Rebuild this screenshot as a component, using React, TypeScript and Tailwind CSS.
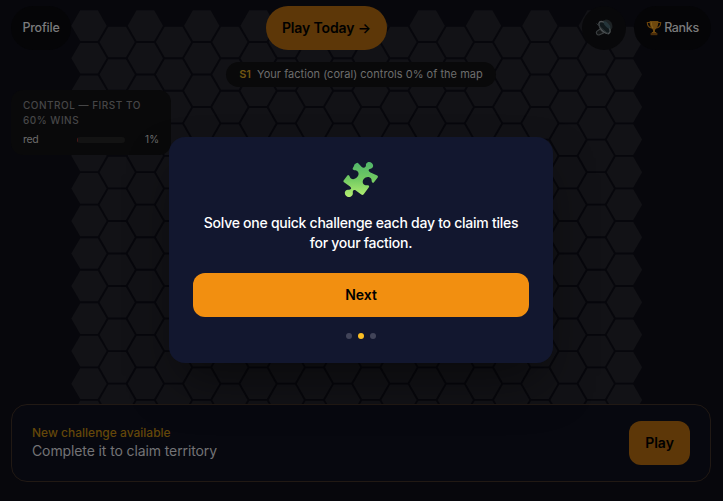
import React from "react";

const COLS = 20;
const ROWS = 14;
const COL_STEP = 28.18;
const ROW_STEP = 32.54;

const hexPoints = (cx: number, cy: number) => {
  const r = 17.7;
  const h = r * 0.866;
  return [
    [cx - r, cy],
    [cx - r / 2, cy - h],
    [cx + r / 2, cy - h],
    [cx + r, cy],
    [cx + r / 2, cy + h],
    [cx - r / 2, cy + h],
  ]
    .map((p) => p.map((n) => n.toFixed(2)).join(","))
    .join(" ");
};

const HexMap: React.FC = () => (
  <svg className="absolute inset-0" width="723" height="501" viewBox="0 0 723 501">
    {Array.from({ length: COLS * ROWS }, (_, i) => {
      const col = i % COLS;
      const row = Math.floor(i / COLS);
      const cx = 89 + col * COL_STEP;
      const cy = 25.7 + row * ROW_STEP + (col % 2 ? ROW_STEP / 2 : 0);
      return <polygon key={i} points={hexPoints(cx, cy)} fill="#121216" />;
    })}
  </svg>
);

const MutedIcon: React.FC = () => (
  <svg width="20" height="20" viewBox="0 0 20 20" fill="none">
    <path d="M6 11 2.800 13.300c-1.300 1.800.2 3.900 2.300 3.700L9.500 15z" fill="#141617" stroke="#3c4042" strokeWidth="1.100" />
    <path d="M8 3 12 1.500c4.500.3 7 4.300 6.300 8.500L14.500 15z" fill="#1d2224" />
    <ellipse cx="10.500" cy="9.500" rx="3.800" ry="7.300" transform="rotate(-42 10.500 9.500)" fill="#10181b" stroke="#4c5153" strokeWidth="1.300" />
    <ellipse cx="13" cy="7" rx="1.900" ry="4.500" transform="rotate(-42 13 7)" fill="#25353a" />
    <path d="M2.500 5.500 14.500 16.500" stroke="#303638" strokeWidth="1" />
  </svg>
);

const TrophyIcon: React.FC = () => (
  <svg width="16" height="16" viewBox="0 0 16 16" fill="none">
    <path d="M4 2.500H1.300c0 3 1.200 4.800 4 5.500M12 2.500h2.700c0 3-1.200 4.800-4 5.500" stroke="#6b430b" strokeWidth="1.100" />
    <path d="M3.600 1h8.800c0 4.500-1 7.500-3.400 8.700v2.300h1.200v1.500H5.800V12H7V9.700C4.600 8.500 3.600 5.500 3.600 1Z" fill="#6f480d" />
    <path d="M5.300 2.200c.1 2.800.6 4.600 1.700 5.800" stroke="#8a671d" strokeWidth=".9" />
    <path d="M4.600 13h6.800v2.200H4.600z" fill="#4b2d0a" />
  </svg>
);

const PuzzleIcon: React.FC = () => (
  <svg width="36" height="36" viewBox="0 0 36 36">
    <defs>
      <linearGradient id="puzzle" x1="0" y1="0" x2="0" y2="1">
        <stop offset="0" stopColor="#50b46a" />
        <stop offset="0.5" stopColor="#73cb62" />
        <stop offset="1" stopColor="#b4ef72" />
      </linearGradient>
    </defs>
    <path
      fill="url(#puzzle)"
      d="M11.600 2.200 13.600 .9Q14.600 .4 15.500 1.400L18.500 4.700C20 6.200 21.500 6 22.500 4.800C23.400 3.700 22.500 3 23.200 1.700C24.300-.3 27.300-.4 29 1.200C30.800 3 30.300 5.300 28.700 6.200C27.200 7 26 6.700 25.700 7.900C25.400 9 26.500 9.900 27.500 10.500L34.200 13.600Q35.500 14.400 34.500 15.700L31 20.200Q30.200 21.200 29.300 20.400C28.200 19.400 29 18.200 28.200 16.800C26.800 14.300 22.800 14.300 20.700 17C18.800 19.500 19.700 22.800 22.500 23.300C23.900 23.600 24.800 22.800 25.800 23.700Q26.500 24.400 25.700 25.400L20.700 32.300Q19.600 33.600 18.300 32.600L12.800 28.500C11.600 27.600 10.300 28.100 9.900 29.200C9.500 30.300 10.300 31.300 9.500 32.900C8.300 35.200 4.800 35.600 3 33.700C1.100 31.700 1.600 28.900 3.700 28C5.400 27.300 7 28.100 7.800 27C8.600 25.900 7.700 25 6.700 24.200L1 20.300Q-.1 19.400 .8 18.200L4.200 13.700Q5.100 12.600 6.100 13.500C7 14.300 6.700 15.500 8 16.500C10.300 18.200 14.200 16.500 15.300 13.300C16.200 10.400 14.700 8.600 12.600 8.200C11.400 8 10.700 8.400 10 7.600C9.200 6.700 9.900 5.900 10.600 4.800Z"
    />
  </svg>
);

const Header: React.FC = () => (
  <header className="relative flex h-[50px] items-end justify-between px-[11px]">
    <button className="h-11 w-[60px] rounded-full bg-[#050507] text-[12.5px] font-medium tracking-[-0.2px] text-[#7b7b7c]">
      Profile
    </button>
    <button className="h-11 w-[121px] rounded-full bg-[#5d3708] pb-0.5 text-[14px] font-semibold tracking-[-0.12px] text-black">
      Play Today →
    </button>
    <div className="flex gap-2">
      <button className="flex size-11 items-center justify-center rounded-full bg-[#08080a]">
        <MutedIcon />
      </button>
      <button className="flex h-11 w-[77px] items-center justify-center gap-0.5 rounded-full bg-[#050507] text-[12.5px] font-medium tracking-[-0.35px] text-[#7b7b7c]">
        <TrophyIcon />
        Ranks
      </button>
    </div>
  </header>
);

const ControlPanel: React.FC = () => (
  <section className="relative mt-[3px] ml-[11px] h-[65px] w-40 rounded-xl bg-[#09090a] px-3 pt-2 text-[#6c6c6c]">
    <h2 className="text-[10px] leading-[15px] font-medium tracking-[0.5px] text-[#464647]">
      CONTROL — FIRST TO
      <br />
      60% WINS
    </h2>
    <div className="mt-1 flex h-[15px] items-center text-[10.5px]">
      <span className="w-[54px] tracking-[-0.3px]">red</span>
      <span className="h-1.5 w-12 overflow-hidden rounded-full bg-[#131313]">
        <span className="block h-full w-px bg-[#4a1717]" />
      </span>
      <span className="ml-auto text-[10px]">1%</span>
    </div>
  </section>
);

const ChallengeBar: React.FC = () => (
  <section className="relative mx-[11px] mt-auto mb-[19px] flex h-[78px] items-center justify-between rounded-2xl border border-[#211914] bg-[#07080f] px-5">
    <div>
      <p className="text-[12px] leading-4 font-medium text-[#644709]">New challenge available</p>
      <p className="text-[14px] leading-5 tracking-[-0.11px] text-[#737376]">Complete it to claim territory</p>
    </div>
    <button className="h-11 w-[61px] rounded-xl bg-[#5d3708] pb-0.5 text-[14px] font-semibold text-black">Play</button>
  </section>
);

const Onboarding: React.FC = () => (
  <div className="absolute inset-x-0 top-0 flex h-[500px] items-center justify-center">
    <div className="flex h-[226px] w-96 flex-col items-center rounded-2xl bg-[#12172f] px-6 pt-[25px] shadow-2xl shadow-black/50">
      <PuzzleIcon />
      <p className="mt-[15px] text-center text-[14px] leading-5 font-medium tracking-[-0.26px] text-white">
        Solve one quick challenge each day to claim tiles
        <br />
        for your faction.
      </p>
      <button className="mt-5 h-11 w-full rounded-xl bg-[#f28f10] pb-0.5 text-[14px] font-semibold text-black">
        Next
      </button>
      <div className="mt-4 flex gap-1.5">
        <span className="size-1.5 rounded-full bg-[#414459]" />
        <span className="size-1.5 rounded-full bg-[#fbbf24]" />
        <span className="size-1.5 rounded-full bg-[#414459]" />
      </div>
    </div>
  </div>
);

export default function App() {
  return (
    <div className="w-[723px] overflow-hidden bg-[#07070c]">
      <main className="relative flex h-[501px] w-[722px] flex-col font-['Inter',sans-serif]">
        <HexMap />
        <Header />
        <div className="relative mt-3 flex h-[25px] w-[270px] items-center justify-center gap-1.5 self-center rounded-full bg-[#09090a] text-[11px] tracking-[0.03px] text-[#6d6d6d]">
          <span className="font-semibold text-[#725611]">S1</span>
          <span>Your faction (coral) controls 0% of the map</span>
        </div>
        <ControlPanel />
        <ChallengeBar />
        <Onboarding />
      </main>
    </div>
  );
}
